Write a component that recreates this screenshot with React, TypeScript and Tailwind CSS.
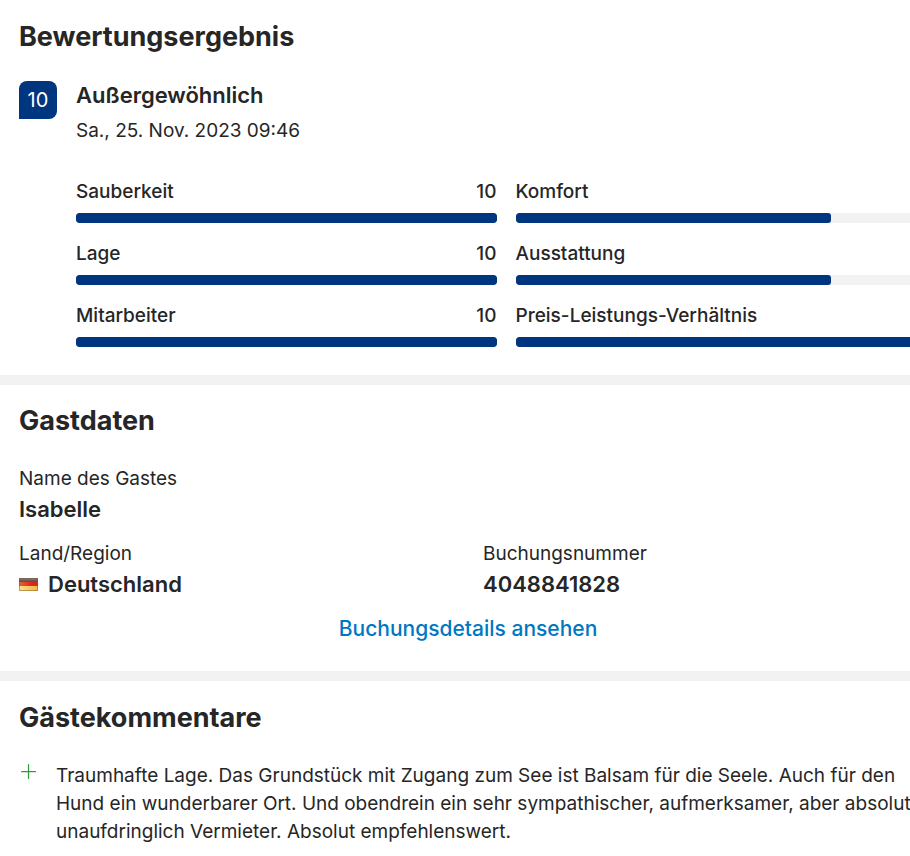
interface Score {
  label: string;
  value: number;
  percent: number;
}

const leftScores: Score[] = [
  { label: "Sauberkeit", value: 10, percent: 100 },
  { label: "Lage", value: 10, percent: 100 },
  { label: "Mitarbeiter", value: 10, percent: 100 },
];

const rightScores: Score[] = [
  { label: "Komfort", value: 7.5, percent: 75 },
  { label: "Ausstattung", value: 7.5, percent: 75 },
  { label: "Preis-Leistungs-Verhältnis", value: 10, percent: 100 },
];

function ScoreRow({ score, showValue }: { score: Score; showValue: boolean }) {
  return (
    <li>
      <div className="flex justify-between font-medium">
        <span>{score.label}</span>
        {showValue && <span>{score.value}</span>}
      </div>
      <div className="mt-[7px] h-2.5 overflow-hidden rounded-[3px] bg-[#f2f2f2]">
        <div
          className="h-full rounded-[3px] bg-[#00357f]"
          style={{ width: `${score.percent}%` }}
        />
      </div>
    </li>
  );
}

function GermanFlag() {
  return (
    <svg viewBox="0 0 19 13" className="h-[13px] w-[19px]" aria-hidden="true">
      <defs>
        <linearGradient id="flag-black" x1="0" y1="0" x2="0" y2="1">
          <stop offset="0" stopColor="#8a7f7b" />
          <stop offset="1" stopColor="#4c3a36" />
        </linearGradient>
        <linearGradient id="flag-red" x1="0" y1="0" x2="1" y2="0">
          <stop offset="0" stopColor="#e8603f" />
          <stop offset="0.6" stopColor="#e02a20" />
          <stop offset="1" stopColor="#c8281c" />
        </linearGradient>
        <linearGradient id="flag-gold" x1="0" y1="0" x2="1" y2="0">
          <stop offset="0" stopColor="#fbdf8a" />
          <stop offset="1" stopColor="#f2b63a" />
        </linearGradient>
      </defs>
      <rect width="19" height="5" fill="url(#flag-black)" />
      <rect y="4" width="19" height="5" fill="url(#flag-red)" />
      <rect y="8" width="19" height="5" fill="url(#flag-gold)" />
      <rect x="0.5" y="0.5" width="18" height="12" fill="none" stroke="#7a5a3c" strokeOpacity="0.5" />
    </svg>
  );
}

export default function App() {
  return (
    <main className="overflow-hidden bg-white font-['Inter',sans-serif] text-[19px] leading-7 text-[#262626]">
      <section className="pt-[21px] pb-7 pl-[19px]">
        <h2 className="text-[27px] font-bold leading-8">Bewertungsergebnis</h2>
        <div className="mt-[26px] flex gap-[19px]">
          <div className="mt-0.5 flex size-[38px] shrink-0 items-center justify-center rounded-lg rounded-bl-none bg-[#00357f] text-[20px] text-white">
            10
          </div>
          <div>
            <h3 className="text-[22px] font-semibold leading-8">
              Außergewöhnlich
            </h3>
            <p className="mt-1.5">Sa., 25. Nov. 2023 09:46</p>
          </div>
        </div>
        {/* The score grid runs past the right edge of the view. */}
        <div className="-mr-[26px] mt-[33px] ml-[57px] grid grid-cols-2 gap-[19px]">
          <ul className="space-y-[17px]">
            {leftScores.map((s) => (
              <ScoreRow key={s.label} score={s} showValue />
            ))}
          </ul>
          <ul className="space-y-[17px]">
            {rightScores.map((s) => (
              <ScoreRow key={s.label} score={s} showValue={false} />
            ))}
          </ul>
        </div>
      </section>

      <section className="border-t-10 border-[#f2f2f2] px-[19px] pt-5 pb-7">
        <h2 className="text-[27px] font-bold leading-8">Gastdaten</h2>
        <dl className="mt-7">
          <dt>Name des Gastes</dt>
          <dd className="text-[22px] font-semibold leading-8">Isabelle</dd>
        </dl>
        <dl className="mt-[15px] grid grid-cols-2 gap-x-14">
          <div>
            <dt>Land/Region</dt>
            <dd className="flex items-center gap-2.5 text-[22px] font-semibold leading-8">
              <GermanFlag />
              Deutschland
            </dd>
          </div>
          <div>
            <dt>Buchungsnummer</dt>
            <dd className="text-[22px] font-semibold leading-8">4048841828</dd>
          </div>
        </dl>
        <p className="mt-[15px] pl-[26px] text-center text-[21px] font-medium">
          <a href="#buchung" className="text-[#0077c2]">
            Buchungsdetails ansehen
          </a>
        </p>
      </section>

      <section className="border-t-10 border-[#f2f2f2] pt-[21px] pb-3 pl-[19px]">
        <h2 className="text-[27px] font-bold leading-8">Gästekommentare</h2>
        <div className="-mr-4 mt-7 flex gap-[19px]">
          <svg viewBox="0 0 18 18" className="size-[18px] shrink-0" aria-hidden="true">
            <path d="M9.5 2.5v14M2.5 9.5h14" stroke="#2f9e3a" strokeWidth="1.25" strokeLinecap="round" />
          </svg>
          <p>
            Traumhafte Lage. Das Grundstück mit Zugang zum See ist Balsam für die
            Seele. Auch für den Hund ein wunderbarer Ort. Und obendrein ein sehr
            sympathischer, aufmerksamer, aber absolut unaufdringlich Vermieter.
            Absolut empfehlenswert.
          </p>
        </div>
      </section>
    </main>
  );
}
